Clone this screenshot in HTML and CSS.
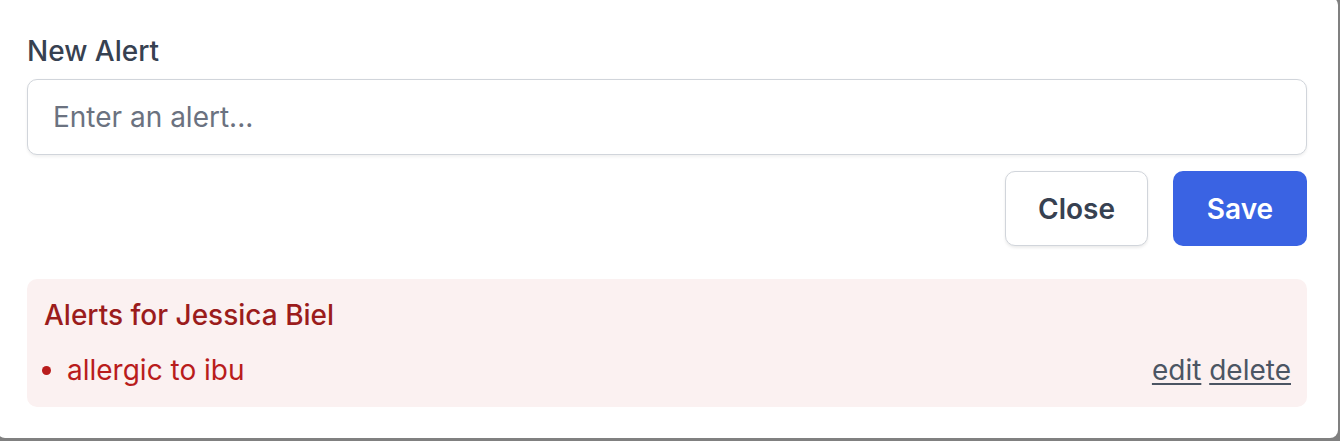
FILE: index.html
```html
<!DOCTYPE html>
<html lang="en">
<head>
<meta charset="utf-8">
<title>New Alert</title>
<link rel="stylesheet" href="styles.css">
</head>
<body>
<div class="modal">
  <label class="label" for="alert">New Alert</label>
  <input id="alert" class="input" type="text" placeholder="Enter an alert...">
  <div class="actions">
    <button class="btn btn-close" type="button">Close</button>
    <button class="btn btn-save" type="button">Save</button>
  </div>
  <div class="alerts">
    <h3 class="alerts-title">Alerts for Jessica Biel</h3>
    <ul class="alerts-list">
      <li class="alert-item">
        <span class="alert-text">allergic to ibu</span>
        <span class="alert-links"><a href="#" class="link">edit</a> <a href="#" class="link">delete</a></span>
      </li>
    </ul>
  </div>
</div>
</body>
</html>
```

FILE: styles.css
```css
* { box-sizing: border-box; }
html, body {
  margin: 0;
  height: 100%;
}
body {
  background: #808080;
  overflow: hidden;
  font-family: Inter, "Noto Sans", "Liberation Sans", sans-serif;
}
.modal {
  margin: -3px 0 0 -3px;
  width: 1341px;
  height: 441px;
  background: #ffffff;
  border-radius: 8px;
  padding: 33px 31px 0 30px;
  display: flex;
  flex-direction: column;
}
.label {
  display: block;
  font-size: 28px;
  line-height: 42px;
  font-weight: 500;
  color: #374151;
}
.input {
  margin-top: 7px;
  height: 76px;
  width: 100%;
  border: 1.75px solid #d1d5db;
  border-radius: 10px;
  padding: 0 25px;
  font-family: inherit;
  font-size: 28px;
  color: #111827;
  background: #fff;
  box-shadow: 0 1.75px 3px rgba(0,0,0,0.06);
  outline: none;
}
.input::placeholder { color: #6b7280; }
.actions {
  margin-top: 16px;
  display: flex;
  justify-content: flex-end;
  gap: 25px;
}
.btn {
  height: 75px;
  border-radius: 10px;
  font-family: inherit;
  font-size: 28px;
  font-weight: 600;
  padding: 0;
  cursor: pointer;
}
.btn-close {
  width: 143px;
  background: #fff;
  color: #374151;
  border: 1.75px solid #d1d5db;
  box-shadow: 0 1.75px 3px rgba(0,0,0,0.08);
}
.btn-save {
  width: 134px;
  background: #3a63e3;
  color: #fff;
  border: none;
}
.alerts {
  margin-top: 33px;
  background: #fbf1f1;
  border-radius: 10px;
  height: 128px;
  padding: 15px 16px 0 17px;
}
.alerts-title {
  margin: 0;
  font-size: 28px;
  line-height: 42px;
  font-weight: 500;
  color: #9b1c1c;
}
.alerts-list {
  margin: 13px 0 0;
  padding: 0 0 0 23px;
  list-style: disc;
  color: #b91c1c;
}
.alert-item {
  font-size: 28px;
  line-height: 42px;
}
.alert-item::marker { color: #b91c1c; }
.alert-links {
  float: right;
}
.link {
  color: #4b5563;
  text-decoration: underline;
  text-underline-offset: 3px;
  text-decoration-thickness: 2px;
}
```
